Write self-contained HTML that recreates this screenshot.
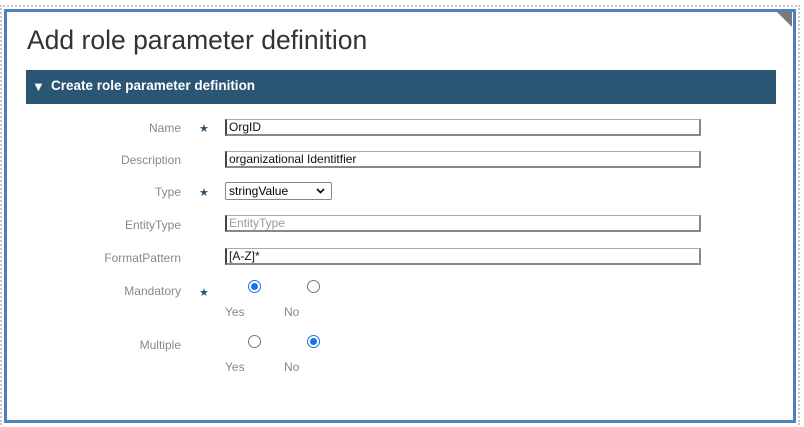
<!DOCTYPE html><html><head><style>
body{margin:0;width:804px;height:427px;background:#fff;font-family:"Liberation Sans",sans-serif;position:relative;overflow:hidden}
.dot{position:absolute;left:0;top:5px;width:800px;height:420px;border:2px dotted #c8c8c8;box-sizing:border-box;border-bottom:none}
.frame{position:absolute;left:4px;top:9px;width:792px;height:414px;border:3px solid #4f81bd;box-sizing:border-box;background:#fff}
.tri{position:absolute;left:777px;top:12px;width:0;height:0;border-top:15px solid #7a7a7a;border-left:15px solid transparent}
h1{position:absolute;left:27px;top:25px;margin:0;font-weight:normal;font-size:26.5px;color:#333}
.bar{position:absolute;left:26px;top:70px;width:750px;height:34px;background:#2a5573;color:#fff;font-weight:bold;font-size:13.5px;line-height:32px}
.bar span{position:absolute;left:6px;top:1px;font-size:13px}
.bar b{position:absolute;left:25px}
.lbl{position:absolute;right:623px;font-size:12px;color:#888;text-align:right}
.star{position:absolute;left:199px;color:#2a5573;font-size:11px}
.in{position:absolute;left:225px;width:476px;height:17px;box-sizing:border-box;border:1px solid #aaa;border-left:2px solid #444;border-right:2px solid #888;border-bottom:2px solid #888;font-size:12px;line-height:14px;padding-left:2px;color:#111}
.sel{position:absolute;left:225px;top:182px;width:107px;height:18px;border:1px solid #888;border-radius:2px;box-sizing:border-box;font-size:12px;line-height:16px;padding-left:3px}
.r{position:absolute;width:11px;height:11px;border:1px solid #777;border-radius:50%;background:#fff}
.r.on{border:1px solid #1a73e8;width:11px;height:11px}
.r.on:after{content:"";position:absolute;left:2px;top:2px;width:7px;height:7px;border-radius:50%;background:#1a73e8}
.t{position:absolute;font-size:12px;color:#888}
</style></head><body>
<div class="dot"></div>
<div class="frame"></div>
<div class="tri"></div>
<h1>Add role parameter definition</h1>
<div class="bar"><span>▼</span><b>Create role parameter definition</b></div>
<div class="lbl" style="top:121px">Name</div><div class="star" style="top:122px">★</div>
<div class="in" style="top:119px">OrgID</div>
<div class="lbl" style="top:153px">Description</div>
<div class="in" style="top:151px">organizational Identitfier</div>
<div class="lbl" style="top:185px">Type</div><div class="star" style="top:186px">★</div>
<div class="sel">stringValue<svg style="position:absolute;right:6px;top:5px" width="9" height="6" viewBox="0 0 9 6"><path d="M1 1L4.5 4.5L8 1" stroke="#111" stroke-width="1.8" fill="none"/></svg></div>
<div class="lbl" style="top:218px">EntityType</div>
<div class="in" style="top:215px;color:#999">EntityType</div>
<div class="lbl" style="top:251px">FormatPattern</div>
<div class="in" style="top:248px">[A-Z]*</div>
<div class="lbl" style="top:284px">Mandatory</div><div class="star" style="top:286px">★</div>
<div class="r on" style="left:248px;top:280px"></div><div class="r" style="left:307px;top:280px"></div>
<div class="t" style="left:225px;top:305px">Yes</div><div class="t" style="left:284px;top:305px">No</div>
<div class="lbl" style="top:338px">Multiple</div>
<div class="r" style="left:248px;top:335px"></div><div class="r on" style="left:307px;top:335px"></div>
<div class="t" style="left:225px;top:360px">Yes</div><div class="t" style="left:284px;top:360px">No</div>
</body></html>
